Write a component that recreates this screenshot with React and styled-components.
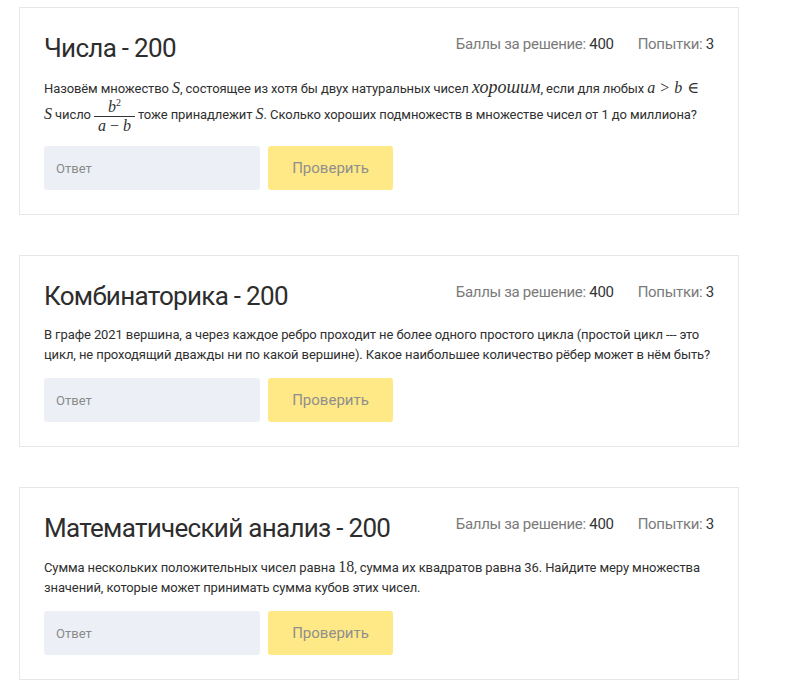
import React from "react";
import styled, { createGlobalStyle } from "styled-components";

const GlobalStyle = createGlobalStyle`
  body {
    margin: 0;
    background: #ffffff;
    font-family: Roboto, "Noto Sans", sans-serif;
    color: #333333;
  }
`;

const Page = styled.div`
  padding: 7px 0 20px 19px;
  display: flex;
  flex-direction: column;
  gap: 40px;
`;

const Card = styled.div`
  width: 720px;
  box-sizing: border-box;
  border: 1px solid #e6e6e6;
  padding: 23px 24px 24px 24px;
  background: #fff;
`;

const Header = styled.div`
  display: flex;
  justify-content: space-between;
  align-items: flex-start;
`;

const Title = styled.h2`
  margin: 0;
  font-size: 26px;
  line-height: 34px;
  font-weight: 400;
  letter-spacing: -0.7px;
  color: #2d2d2d;
`;

const Stats = styled.div`
  display: flex;
  gap: 24px;
  margin-top: 3px;
  font-size: 15px;
  line-height: 20px;
  color: #7a7a7a;
  letter-spacing: -0.3px;
`;

const Value = styled.span`
  color: #333;
`;

const Text = styled.p`
  margin: 12px 0 13px;
  font-size: 13px;
  line-height: 20px;
  letter-spacing: -0.1px;
  color: #2f2f2f;
`;

const M = styled.span`
  font-family: "Liberation Serif", "DejaVu Serif", serif;
  font-style: italic;
  letter-spacing: 0;
  font-size: ${(p) => (p.big ? "18px" : "16px")};
`;

const Rel = styled.span`
  font-family: "Liberation Serif", "DejaVu Serif", serif;
  font-size: 16px;
  margin: 0 5px;
`;

const Num = styled.span`
  font-family: "Liberation Serif", "DejaVu Serif", serif;
  font-size: 16px;
  letter-spacing: 0;
`;

const Frac = styled.span`
  display: inline-flex;
  flex-direction: column;
  align-items: center;
  vertical-align: middle;
  margin: 0 5px;
  font-family: "Liberation Serif", "DejaVu Serif", serif;
  font-style: italic;
  font-size: 16px;
  line-height: 15px;
  letter-spacing: 0;
`;

const FracTop = styled.span`
  padding: 0 2px 2px;
  border-bottom: 1px solid #333;
  width: 100%;
  text-align: center;
`;

const FracBottom = styled.span`
  padding: 1px 2px 0;
`;

const Sup = styled.sup`
  font-size: 10px;
  font-style: normal;
  line-height: 0;
`;

const Minus = styled.span`
  font-style: normal;
  margin: 0 4px;
`;

const Row = styled.div`
  display: flex;
  gap: 8px;
`;

const Input = styled.input`
  width: 216px;
  height: 44px;
  box-sizing: border-box;
  border: none;
  border-radius: 3px;
  background: #ecf0f6;
  padding: 0 12px;
  font-family: Roboto, sans-serif;
  font-size: 13px;
  color: #333;
  outline: none;
  &::placeholder {
    color: #8a8a8a;
  }
`;

const Button = styled.button`
  width: 125px;
  height: 44px;
  border: none;
  border-radius: 3px;
  background: #ffe886;
  color: #8f8f8f;
  font-family: Roboto, sans-serif;
  font-size: 15px;
`;

const Problem = ({ title, children }) => (
  <Card>
    <Header>
      <Title>{title}</Title>
      <Stats>
        <span>
          Баллы за решение: <Value>400</Value>
        </span>
        <span>
          Попытки: <Value>3</Value>
        </span>
      </Stats>
    </Header>
    <Text>{children}</Text>
    <Row>
      <Input placeholder="Ответ" />
      <Button>Проверить</Button>
    </Row>
  </Card>
);

export default function App() {
  return (
    <>
      <GlobalStyle />
      <Page>
        <Problem title="Числа - 200">
          Назовём множество <M>S</M>, состоящее из хотя бы двух натуральных
          чисел <M big>хорошим</M>, если для любых <M>a</M>
          <Rel>&gt;</Rel>
          <M>b</M>
          <Rel>∈</Rel> <M>S</M> число
          <Frac>
            <FracTop>
              b<Sup>2</Sup>
            </FracTop>
            <FracBottom>
              a<Minus>−</Minus>b
            </FracBottom>
          </Frac>
          тоже принадлежит <M>S</M>. Сколько хороших подмножеств в множестве
          чисел от 1 до миллиона?
        </Problem>
        <Problem title="Комбинаторика - 200">
          В графе 2021 вершина, а через каждое ребро проходит не более одного
          простого цикла (простой цикл --- это цикл, не проходящий дважды ни по
          какой вершине). Какое наибольшее количество рёбер может в нём быть?
        </Problem>
        <Problem title="Математический анализ - 200">
          Сумма нескольких положительных чисел равна <Num>18</Num>, сумма их
          квадратов равна 36. Найдите меру множества значений, которые может
          принимать сумма кубов этих чисел.
        </Problem>
      </Page>
    </>
  );
}
